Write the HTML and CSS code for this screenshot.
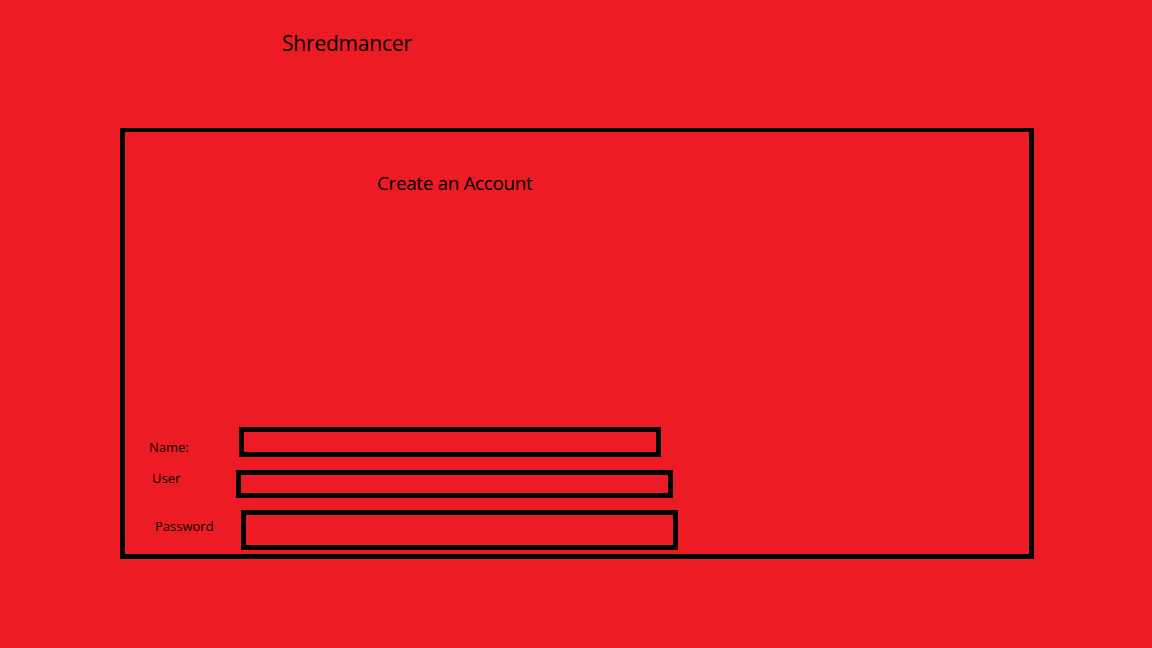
FILE: index.html
```html
<!DOCTYPE html>
<html lang="en">
<head>
<meta charset="utf-8">
<title>Shredmancer</title>
<link rel="stylesheet" href="styles.css">
</head>
<body>
<header class="topbar">
  <h1 class="title">Shredmancer</h1>
</header>
<main class="panel">
  <h2 class="panel-title">Create an Account</h2>
  <form class="signup">
    <div class="row row-name">
      <label class="label" for="name">Name:</label>
      <div class="field" id="name"></div>
    </div>
    <div class="row row-user">
      <label class="label" for="user">User</label>
      <div class="field" id="user"></div>
    </div>
    <div class="row row-pass">
      <label class="label" for="pass">Password</label>
      <div class="field" id="pass"></div>
    </div>
  </form>
</main>
</body>
</html>
```

FILE: styles.css
```css
html, body {
  margin: 0;
  padding: 0;
}
body {
  background: #ed1c24;
  color: #000;
  font-family: "Open Sans", "Noto Sans", sans-serif;
  width: 1152px;
  height: 648px;
  overflow: hidden;
}
.topbar {
  padding: 29px 0 0 282px;
}
.title {
  margin: 0;
  font-size: 21px;
  line-height: 28px;
  letter-spacing: -0.2px;
  font-weight: 400;
}
.panel {
  box-sizing: border-box;
  margin: 71px 0 0 120px;
  width: 914px;
  height: 431px;
  border: solid #000;
  border-width: 4px 5px 5px 5px;
  display: flex;
  flex-direction: column;
  padding-bottom: 4px;
}
.panel-title {
  margin: 38px 0 0 252px;
  font-size: 19px;
  line-height: 26px;
  letter-spacing: -0.4px;
  font-weight: 400;
}
.signup {
  margin-top: auto;
  display: flex;
  flex-direction: column;
}
.row {
  display: flex;
  align-items: flex-start;
}
.label {
  font-size: 13px;
  line-height: 18px;
  flex: 0 0 auto;
}
.field {
  box-sizing: border-box;
  border: 5px solid #000;
  flex: 0 0 auto;
}
.row-name .label { margin: 11px 0 0 24px; width: 90px; }
.row-name .field { width: 422px; height: 30px; }
.row-user { margin-top: 13px; }
.row-user .label { margin: -1px 0 0 27px; width: 84px; }
.row-user .field { width: 437px; height: 28px; }
.row-pass { margin-top: 12px; }
.row-pass .label { margin: 7px 0 0 30px; width: 86px; }
.row-pass .field { width: 437px; height: 40px; }
```
